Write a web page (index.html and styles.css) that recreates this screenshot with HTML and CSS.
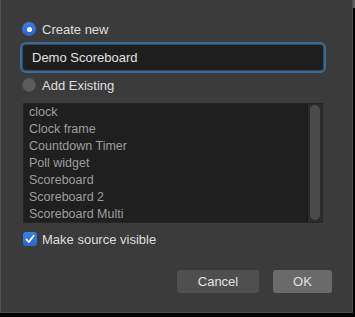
FILE: index.html
```html
<!DOCTYPE html>
<html>
<head>
<meta charset="utf-8">
<link rel="stylesheet" href="styles.css">
</head>
<body>
<div class="dialog">
  <label class="option">
    <span class="radio radio-on"><span class="radio-dot"></span></span>
    <span class="label">Create new</span>
  </label>
  <div class="name-input">Demo Scoreboard</div>
  <label class="option option-existing">
    <span class="radio radio-off"></span>
    <span class="label">Add Existing</span>
  </label>
  <div class="listbox">
    <ul class="items">
      <li>clock</li>
      <li>Clock frame</li>
      <li>Countdown Timer</li>
      <li>Poll widget</li>
      <li>Scoreboard</li>
      <li>Scoreboard 2</li>
      <li>Scoreboard Multi</li>
    </ul>
    <div class="scrollbar"><div class="thumb"></div></div>
  </div>
  <label class="option option-visible">
    <span class="checkbox">
      <svg width="14" height="14" viewBox="0 0 14 14"><path d="M3.4 7.3 L5.9 10 L10.7 3.8" fill="none" stroke="#fff" stroke-width="1.8" stroke-linecap="round" stroke-linejoin="round"/></svg>
    </span>
    <span class="label">Make source visible</span>
  </label>
  <div class="buttons">
    <button class="btn btn-cancel">Cancel</button>
    <button class="btn btn-ok">OK</button>
  </div>
</div>
</body>
</html>
```
FILE: styles.css
```css
html, body {
  margin: 0;
  padding: 0;
}
body {
  width: 355px;
  height: 317px;
  background: linear-gradient(to bottom, #5e5e5e 0, #5e5e5e 8px, #000 8px);
  font-family: "Liberation Sans", Arial, sans-serif;
  overflow: hidden;
}
.dialog {
  width: 353px;
  height: 313px;
  box-sizing: border-box;
  background: #3b3b3b;
  border: 1px solid #4f4f4f;
  border-top: none;
  padding: 21px 20px 0 21px;
  display: flex;
  flex-direction: column;
  align-items: flex-start;
}
.option {
  display: flex;
  align-items: center;
  height: 16px;
  gap: 6px;
  color: #dedede;
  font-size: 13px;
}
.radio {
  width: 14px;
  height: 14px;
  border-radius: 50%;
  box-sizing: border-box;
  display: flex;
  align-items: center;
  justify-content: center;
}
.radio-on {
  background: linear-gradient(to bottom, #3a7de6, #2866d3);
}
.radio-dot {
  width: 5px;
  height: 5px;
  border-radius: 50%;
  background: #fff;
}
.radio-off {
  background: #5c5c5c;
  border: 1px solid #555;
}
.name-input {
  margin-top: 8px;
  margin-left: 1px;
  width: 300px;
  height: 25px;
  box-sizing: border-box;
  background: #1e1e1e;
  border-radius: 3px;
  box-shadow: 0 0 0 1px #2b4c66, 0 0 0 3px #3d6a8f;
  color: #e2e2e2;
  font-size: 13px;
  line-height: 25px;
  padding-left: 9px;
}
.option-existing {
  margin-top: 7px;
}
.listbox {
  margin-top: 10px;
  margin-left: 1px;
  width: 300px;
  height: 120px;
  box-sizing: border-box;
  background: #1f1f1f;
  border: 1px solid #262626;
  display: flex;
}
.items {
  list-style: none;
  margin: 0;
  padding: 0 0 0 5px;
  flex: 1;
}
.items li {
  height: 17px;
  line-height: 17px;
  font-size: 12.5px;
  color: #9d9d9d;
}
.scrollbar {
  width: 15px;
  box-sizing: border-box;
  background: #2c2c2c;
  border-left: 1px solid #1a1a1a;
  padding: 1px 2px 2px 2px;
  display: flex;
}
.thumb {
  flex: 1;
  background: #4a4a4a;
  border-radius: 5px;
}
.option-visible {
  margin-top: 8px;
  margin-left: 1px;
  gap: 5px;
}
.checkbox {
  width: 14px;
  height: 14px;
  border-radius: 3px;
  background: linear-gradient(to bottom, #3a7de6, #2866d3);
  display: flex;
}
.buttons {
  margin-top: 23px;
  align-self: stretch;
  display: flex;
  justify-content: flex-end;
  gap: 14px;
}
.btn {
  height: 23px;
  border: none;
  border-radius: 3px;
  font-family: "Liberation Sans", Arial, sans-serif;
  font-size: 13px;
  color: #e2e2e2;
  padding: 0;
}
.btn-cancel {
  width: 82px;
  background: #4f4f4f;
}
.btn-ok {
  width: 59px;
  background: #6a6a6a;
}
```
